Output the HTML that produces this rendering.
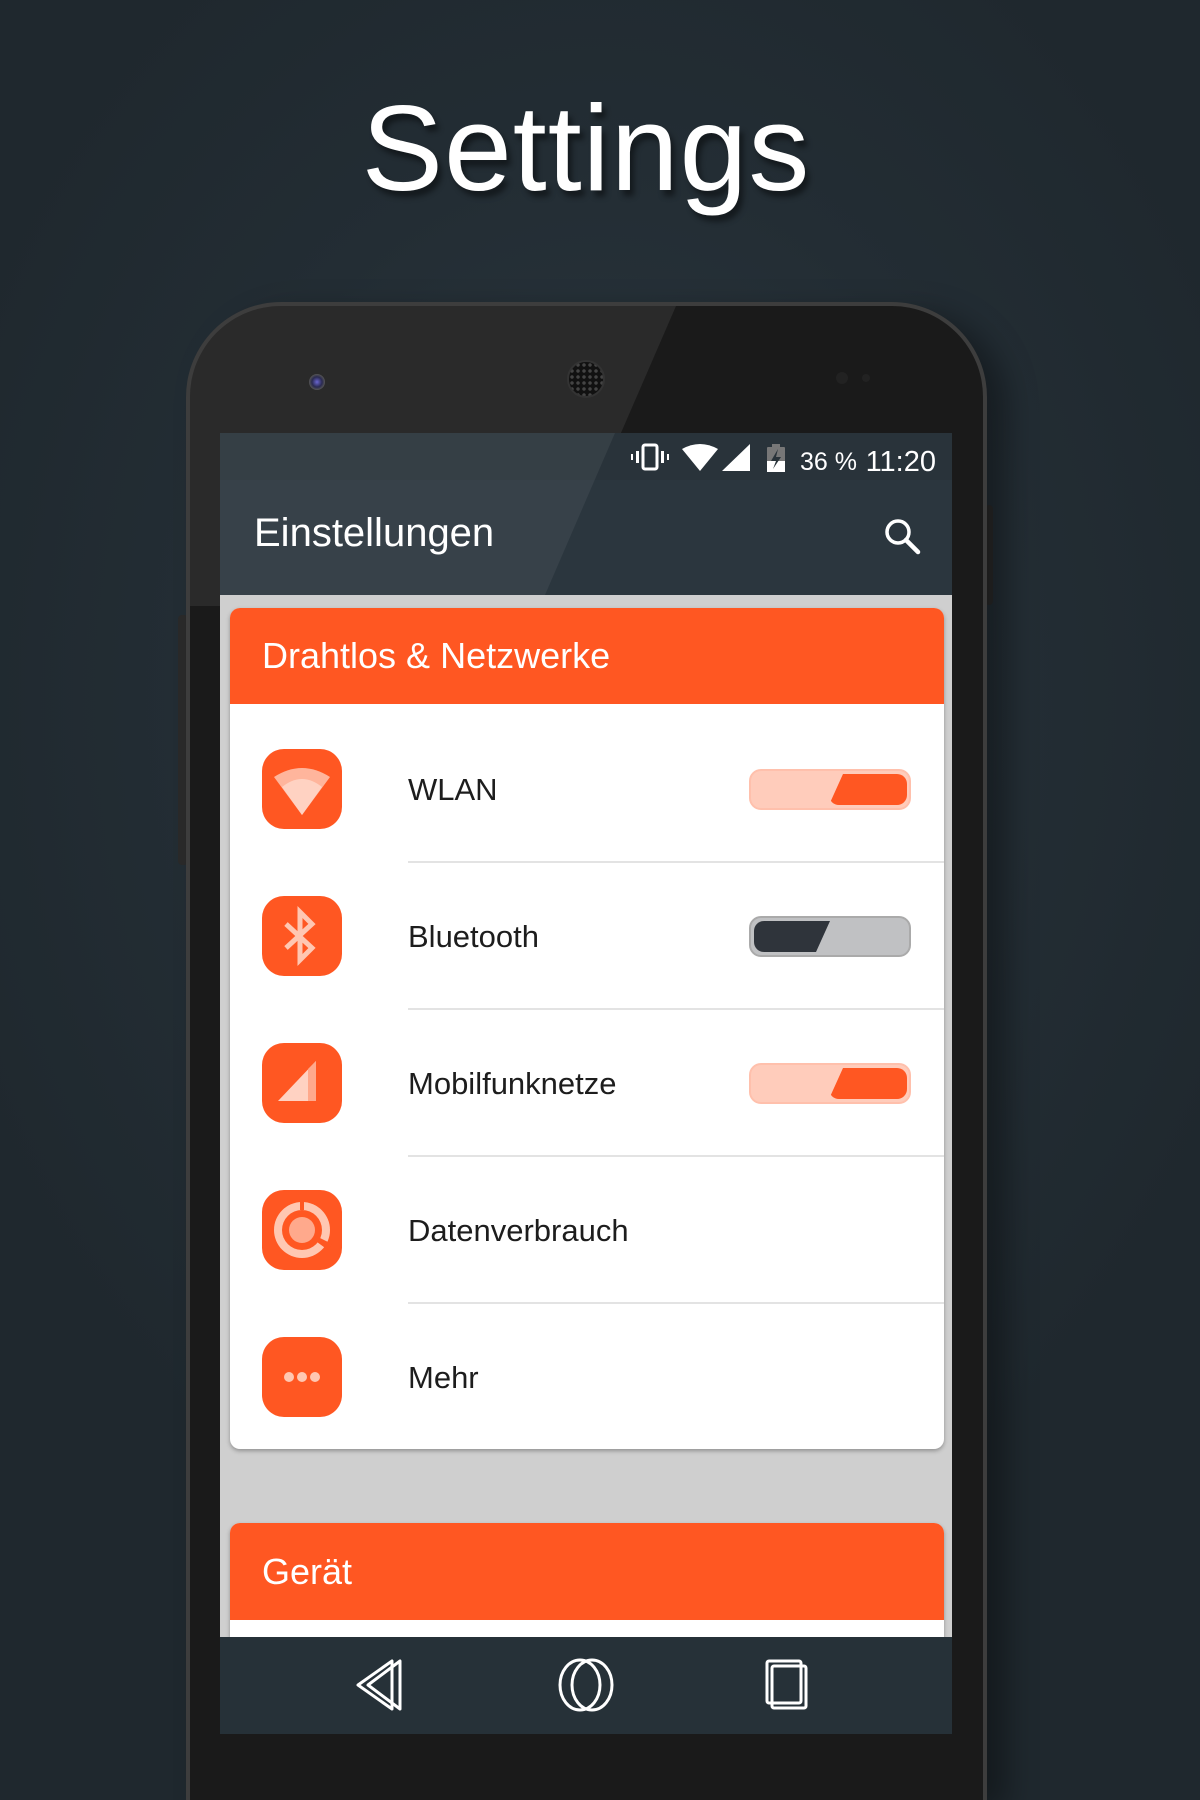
<!DOCTYPE html>
<html><head><meta charset="utf-8"><style>
*{margin:0;padding:0;box-sizing:border-box}
html{width:1200px;height:1800px;overflow:hidden}
body{width:1200px;height:1800px;overflow:hidden;position:relative;font-family:"Liberation Sans",sans-serif;
background:radial-gradient(ellipse 700px 900px at 600px 700px,#2c3840 0%,#232d34 60%,#1f282e 100%)}
.abs{position:absolute}
.title{left:0;width:1172px;text-align:center;top:78px;font-size:122px;color:#fff;letter-spacing:1px;text-shadow:4px 6px 6px rgba(0,0,0,.45)}
.phone{left:186px;top:302px;width:801px;height:1498px;border-radius:95px 95px 0 0;background:#1a1a1a;border:4px solid #3d3d3d;border-bottom:none;box-shadow:20px 10px 30px rgba(0,0,0,.35);overflow:hidden}
.glare{left:0;top:0;width:801px;height:300px;background:rgba(255,255,255,.07);clip-path:polygon(0 0,486px 0,356px 300px,0 300px)}
.screen{left:220px;top:433px;width:732px;height:1301px;background:#cfcfcf;overflow:hidden}
.status{left:0;top:0;width:732px;height:47px;background:#29333a}
.appbar{left:0;top:47px;width:732px;height:115px;background:#2b363e}
.sgl{left:0;top:0;width:732px;height:162px;background:rgba(255,255,255,.06);clip-path:polygon(0 0,395px 0,325px 162px,0 162px)}
.card{left:10px;width:714px;background:#fff;border-radius:10px;overflow:hidden;box-shadow:0 2px 4px rgba(0,0,0,.3)}
.hdr{height:96px;background:#ff5722;color:#fff;font-size:36px;padding-left:32px;line-height:96px}
.row{position:absolute;left:0;width:714px;height:147px}
.ic{position:absolute;left:32px;top:33px;width:80px;height:80px;border-radius:22px;background:#ff5722}
.lbl{position:absolute;left:178px;top:0;line-height:147px;font-size:31px;color:#1d1d1d}
.div{position:absolute;left:178px;right:0;bottom:0;height:2px;background:#e3e3e3}
.tg{position:absolute;left:519px;top:53px;width:162px;height:41px;border-radius:12px}
.nav{left:0;top:1204px;width:732px;height:97px;background:#263138}
</style></head><body>
<div class="abs title">Settings</div>
<div class="abs" style="left:178px;top:615px;width:10px;height:250px;background:#2a2a2a;border-radius:4px"></div>
<div class="abs" style="left:985px;top:505px;width:8px;height:100px;background:#2a2a2a;border-radius:4px"></div>
<div class="abs phone"><div class="abs glare"></div></div>
<div class="abs" style="left:309px;top:374px;width:16px;height:16px;border-radius:50%;background:radial-gradient(#6a66d0 0,#2a2a50 45%,#555 70%,#222 100%)"></div>
<div class="abs" style="left:567px;top:360px;width:38px;height:38px;border-radius:50%;background:radial-gradient(circle,#444 1.5px,#111 2px) 0 0/6px 6px,#111;border:2px solid #333"></div>
<div class="abs" style="left:836px;top:372px;width:12px;height:12px;border-radius:50%;background:#222"></div>
<div class="abs" style="left:862px;top:374px;width:8px;height:8px;border-radius:50%;background:#222"></div>
<div class="abs screen">
 <div class="abs status"></div>
 <div class="abs appbar"></div>
 <div class="abs sgl"></div>
 <svg class="abs" style="left:410px;top:8px" width="320" height="36">
  <g fill="#fff"><rect x="13" y="4" width="14" height="24" rx="2" fill="none" stroke="#fff" stroke-width="3"/><rect x="6" y="10" width="3" height="12"/><rect x="31" y="10" width="3" height="12"/><rect x="1" y="13" width="2" height="6"/><rect x="37" y="13" width="2" height="6"/>
  <path d="M52 8 Q70 -2 88 8 L70 30Z"/><path d="M92 30 L120 3 L120 30Z"/>
  <rect x="137" y="6" width="18" height="25" rx="1" fill="#777"/><rect x="142" y="3" width="8" height="4" fill="#777"/><rect x="137" y="20" width="18" height="11"/><path d="M148 8 L141 20 L146 20 L143 28 L151 16 L146 16Z" fill="#29333a"/></g>
  <text x="170" y="29" font-size="25" fill="#fff" font-family="Liberation Sans">36 %</text>
  <text x="306" y="30" font-size="29" fill="#fff" font-family="Liberation Sans" text-anchor="end">11:20</text>
 </svg>
 <div class="abs" style="left:34px;top:78px;font-size:40px;color:#fff">Einstellungen</div>
 <svg class="abs" style="left:663px;top:84px" width="40" height="40"><circle cx="15" cy="15" r="11" fill="none" stroke="#fff" stroke-width="3.5"/><path d="M23 23 L35 35" stroke="#fff" stroke-width="4.5" stroke-linecap="round"/></svg>
 <div class="abs card" style="top:175px;height:841px">
  <div class="hdr">Drahtlos &amp; Netzwerke</div>
  <div class="row" style="top:108px"><div class="ic"><svg width="80" height="80"><path d="M12 28 Q40 10 68 28 L40 66Z" fill="#ffb59c"/><path d="M20 38 Q40 22 60 38 L40 66Z" fill="#ffd2c2"/></svg></div><div class="lbl">WLAN</div>
   <div class="tg" style="background:#ffccbb;border:2px solid #ffc0ac"><div class="abs" style="left:78px;top:3px;width:78px;height:31px;background:#ff5722;border-radius:10px;clip-path:polygon(14px 0,100% 0,100% 100%,0 100%)"></div></div><div class="div"></div></div>
  <div class="row" style="top:255px"><div class="ic"><svg width="80" height="80"><path d="M24 28 L50 52 L38 64 L38 16 L50 28 L24 52" fill="none" stroke="#ffc7b2" stroke-width="5"/></svg></div><div class="lbl">Bluetooth</div>
   <div class="tg" style="background:#c0c1c3;border:2px solid #aaa"><div class="abs" style="left:3px;top:3px;width:76px;height:31px;background:#2f343b;border-radius:10px 0 0 10px;clip-path:polygon(0 0,100% 0,calc(100% - 14px) 100%,0 100%)"></div></div><div class="div"></div></div>
  <div class="row" style="top:402px"><div class="ic"><svg width="80" height="80"><path d="M16 58 L54 18 L54 58Z" fill="#ffd2c2"/><path d="M46 26 L54 18 L54 58 L46 58Z" fill="#ffa98c"/></svg></div><div class="lbl">Mobilfunknetze</div>
   <div class="tg" style="background:#ffccbb;border:2px solid #ffc0ac"><div class="abs" style="left:78px;top:3px;width:78px;height:31px;background:#ff5722;border-radius:10px;clip-path:polygon(14px 0,100% 0,100% 100%,0 100%)"></div></div><div class="div"></div></div>
  <div class="row" style="top:549px"><div class="ic"><svg width="80" height="80"><circle cx="40" cy="40" r="28" fill="#ffc7b2"/><circle cx="40" cy="40" r="20" fill="#ff5722"/><circle cx="40" cy="40" r="13" fill="#ffa98c"/><path d="M38 10 L42 10 L42 20 L38 20Z" fill="#ff5722"/><path d="M58 48 L70 54 L66 60 L55 52Z" fill="#ff5722"/></svg></div><div class="lbl">Datenverbrauch</div><div class="div"></div></div>
  <div class="row" style="top:696px"><div class="ic"><svg width="80" height="80"><circle cx="27" cy="40" r="5" fill="#ffc7b2"/><circle cx="40" cy="40" r="5" fill="#ffc7b2"/><circle cx="53" cy="40" r="5" fill="#ffc7b2"/></svg></div><div class="lbl">Mehr</div></div>
 </div>
 <div class="abs card" style="top:1090px;height:200px;border-radius:10px 10px 0 0">
  <div class="hdr" style="height:97px;line-height:97px">Gerät</div>
 </div>
 <div class="abs nav">
  <svg class="abs" style="left:0;top:19px" width="732" height="60" fill="none" stroke="#fff" stroke-width="3" stroke-linejoin="round">
   <path d="M138 29 L172 5 L172 53Z M148 29 L180 5 L180 53Z"/>
   <ellipse cx="360" cy="29" rx="20" ry="25"/><ellipse cx="372" cy="29" rx="20" ry="25"/>
   <rect x="552" y="10" width="34" height="42" rx="2"/><rect x="547" y="5" width="34" height="42" rx="2"/>
  </svg>
 </div>
</div>
</body></html>
